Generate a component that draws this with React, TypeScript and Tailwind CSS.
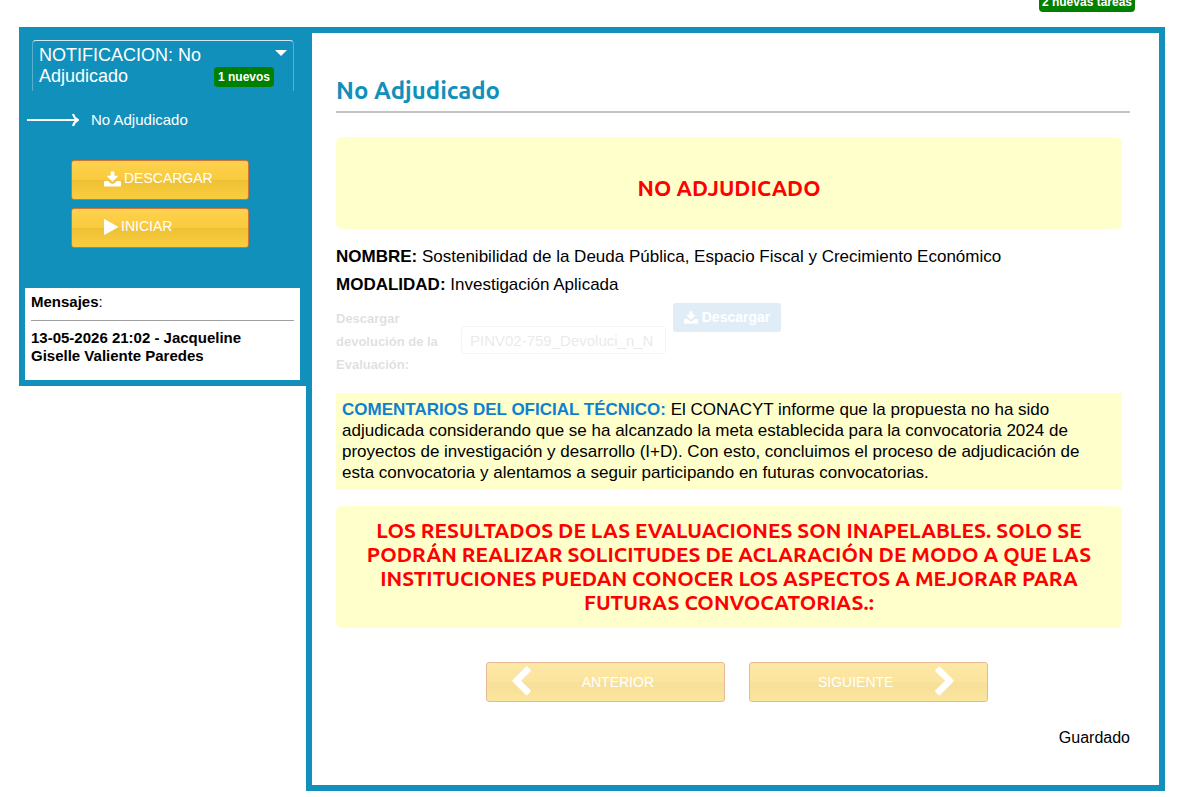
import type { ReactNode } from "react";

function DownloadIcon({ className }: { className: string }) {
  return (
    <svg viewBox="0 0 18 16" fill="currentColor" className={className} aria-hidden="true">
      <path d="M7 0h4v4.500h3.600q.6 0 .2.6l-5.200 5.200q-.6.5-1.200 0L3.200 5.100q-.4-.6.2-.6H7z" />
      <path d="M1 10h3.400l2.800 2.400q1.800 1.200 3.600 0L13.600 10H17q1 0 1 1v4q0 1-1 1H1q-1 0-1-1v-4q0-1 1-1z" />
    </svg>
  );
}

function PlayIcon({ className }: { className: string }) {
  return (
    <svg viewBox="0 0 14 16" fill="currentColor" className={className} aria-hidden="true">
      <path d="M0 .6v14.8q0 .8.7.4l13-7.3q.7-.5 0-1L.7.2Q0-.2 0 .6z" />
    </svg>
  );
}

function ChevronIcon({ direction }: { direction: "left" | "right" }) {
  return (
    <svg viewBox="0 0 1792 1792" fill="currentColor" className="size-8 shrink-0" aria-hidden="true">
      {direction === "left" ? (
        <path d="M1427 301l-531 531 531 531q19 19 19 45t-19 45l-166 166q-19 19-45 19t-45-19l-742-742q-19-19-19-45t19-45l742-742q19-19 45-19t45 19l166 166q19 19 19 45t-19 45z" />
      ) : (
        <path d="M1363 877l-742 742q-19 19-45 19t-45-19l-166-166q-19-19-19-45t19-45l531-531-531-531q-19-19-19-45t19-45l166-166q19-19 45-19t45 19l742 742q19 19 19 45t-19 45z" />
      )}
    </svg>
  );
}

const goldButton =
  "flex items-center rounded-[3px] border border-[#cf7433] bg-[linear-gradient(#fdd250,#f9ca3c_50%,#eec136_51%,#f9ce3e)] text-[14px] text-white";

function SideButton({ children }: { children: ReactNode }) {
  return (
    <button type="button" className={`${goldButton} h-10 w-[178px] gap-[3px] pb-[3px] pl-8`}>
      {children}
    </button>
  );
}

function Sidebar() {
  return (
    <aside className="w-[287px] shrink-0 bg-[#1090ba] pt-[13px] pb-[6px] text-white">
      <button
        type="button"
        className="ml-[13px] flex h-[51px] w-[262px] items-start rounded-t border-x border-t border-x-white/30 border-t-white/80 pl-[6px] text-left"
      >
        <span className="w-[176px] pt-1 text-[18px] leading-[21px]">NOTIFICACION: No Adjudicado</span>
        <span className="flex grow flex-col items-end pt-[9px] pr-[6px]">
          <svg viewBox="0 0 12 6" fill="currentColor" className="h-[6px] w-3" aria-hidden="true">
            <path d="M0 0h12L6 6z" />
          </svg>
          <span className="mt-[11px] mr-[13px] rounded bg-[#008000] px-1 text-[12px] leading-5 font-bold whitespace-nowrap">
            1 nuevos
          </span>
        </span>
      </button>

      <a href="#no-adjudicado" className="mt-[17px] ml-2 flex h-6 items-center gap-3 text-[15px]">
        <svg viewBox="0 0 52 14" fill="none" stroke="currentColor" strokeWidth="2" className="h-[14px] w-[52px]" aria-hidden="true">
          <path d="M0 7h51M46 1q1 4 5 6-4 2-5 6" />
        </svg>
        No Adjudicado
      </a>

      <div className="mt-7 flex flex-col items-center gap-2 pr-[5px]">
        <SideButton>
          <DownloadIcon className="h-4 w-[17px]" />
          DESCARGAR
        </SideButton>
        <SideButton>
          <PlayIcon className="h-4 w-[14px]" />
          INICIAR
        </SideButton>
      </div>

      <section className="mt-10 mr-[6px] ml-[6px] bg-white px-[6px] pt-1 pb-[15px] text-[15px] text-black">
        <h2 className="leading-5">
          <strong>Mensajes</strong>:
        </h2>
        <hr className="my-2 border-[#a0a0a0]" />
        <p className="leading-[18px] font-bold">13-05-2026 21:02 - Jacqueline Giselle Valiente Paredes</p>
      </section>
    </aside>
  );
}

function Banner({ className, children }: { className: string; children: ReactNode }) {
  return (
    <div
      className={`mr-2 rounded-md bg-[#ffffcc] text-center font-['Ubuntu','Noto_Sans',sans-serif] font-bold text-[#ff0000] ${className}`}
    >
      {children}
    </div>
  );
}

function EvaluationDownload() {
  return (
    <div className="mt-1 flex h-[90px] items-start opacity-[0.12]">
      <label htmlFor="devolucion" className="w-[125px] pt-1 pr-2 text-[13px] leading-[23px] font-bold">
        Descargar devolución de la Evaluación:
      </label>
      <input
        id="devolucion"
        type="text"
        readOnly
        defaultValue="PINV02-759_Devoluci_n_N"
        className="mt-[23px] h-[28px] w-[205px] rounded border border-[#aaaaaa] pl-2 text-[15px] text-[#555555]"
      />
      <button
        type="button"
        className="ml-[7px] flex h-[29px] w-[108px] items-center justify-center gap-1 rounded-[3px] bg-[#0a70c0] text-[14px] font-bold text-white"
      >
        <DownloadIcon className="h-[13px] w-[14px]" />
        Descargar
      </button>
    </div>
  );
}

export default function App() {
  return (
    <div className="bg-white pb-[6px] font-['Liberation_Sans',Arial,sans-serif] text-black">
      <header className="flex h-3 items-end justify-end overflow-hidden pr-[65px]">
        <span className="shrink-0 rounded bg-[#008000] px-[3px] text-[12px] leading-5 font-bold text-white">
          2 nuevas tareas
        </span>
      </header>

      <div className="mt-[15px] mr-[35px] ml-[19px] flex items-start">
        <Sidebar />

        <main className="min-w-0 grow border-[6px] border-[#1090ba] pt-[42px] pr-[29px] pb-[35px] pl-6">
          <h1 className="border-b-2 border-[#c4c4c4] pb-1 font-['Ubuntu','Noto_Sans',sans-serif] text-[24px] leading-8 font-bold text-[#1090ba]">
            No Adjudicado
          </h1>

          <Banner className="mt-6 pt-[39px] pb-[29px] text-[22px] leading-6">NO ADJUDICADO</Banner>

          <div className="mt-[14px] text-[17px] leading-7">
            <p>
              <strong>NOMBRE:</strong> Sostenibilidad de la Deuda Pública, Espacio Fiscal y Crecimiento Económico
            </p>
            <p>
              <strong>MODALIDAD:</strong> Investigación Aplicada
            </p>
          </div>

          <EvaluationDownload />

          <p className="mr-2 bg-[#ffffcc] px-[6px] pt-[6px] pb-[7px] text-[17px] leading-[21px]">
            <strong className="text-[#0f7fd0]">COMENTARIOS DEL OFICIAL TÉCNICO:</strong> El CONACYT informe que la
            propuesta no ha sido adjudicada considerando que se ha alcanzado la meta establecida para la convocatoria
            2024 de proyectos de investigación y desarrollo (I+D). Con esto, concluimos el proceso de adjudicación de
            esta convocatoria y alentamos a seguir participando en futuras convocatorias.
          </p>

          <Banner className="mt-4 px-7 pt-3 pb-[14px] text-[21px] leading-6">
            LOS RESULTADOS DE LAS EVALUACIONES SON INAPELABLES. SOLO SE PODRÁN REALIZAR SOLICITUDES DE ACLARACIÓN DE
            MODO A QUE LAS INSTITUCIONES PUEDAN CONOCER LOS ASPECTOS A MEJORAR PARA FUTURAS CONVOCATORIAS.:
          </Banner>

          <div className="mt-[34px] flex justify-center gap-6 pl-2 opacity-50">
            <button type="button" disabled className={`${goldButton} h-10 w-[239px] pr-[70px] pl-[18px]`}>
              <ChevronIcon direction="left" />
              <span className="grow text-right">ANTERIOR</span>
            </button>
            <button type="button" disabled className={`${goldButton} h-10 w-[239px] pr-[26px] pl-[68px]`}>
              <span className="grow text-left">SIGUIENTE</span>
              <ChevronIcon direction="right" />
            </button>
          </div>

          <p className="mt-6 text-right text-[16px] leading-6">Guardado</p>
        </main>
      </div>
    </div>
  );
}
